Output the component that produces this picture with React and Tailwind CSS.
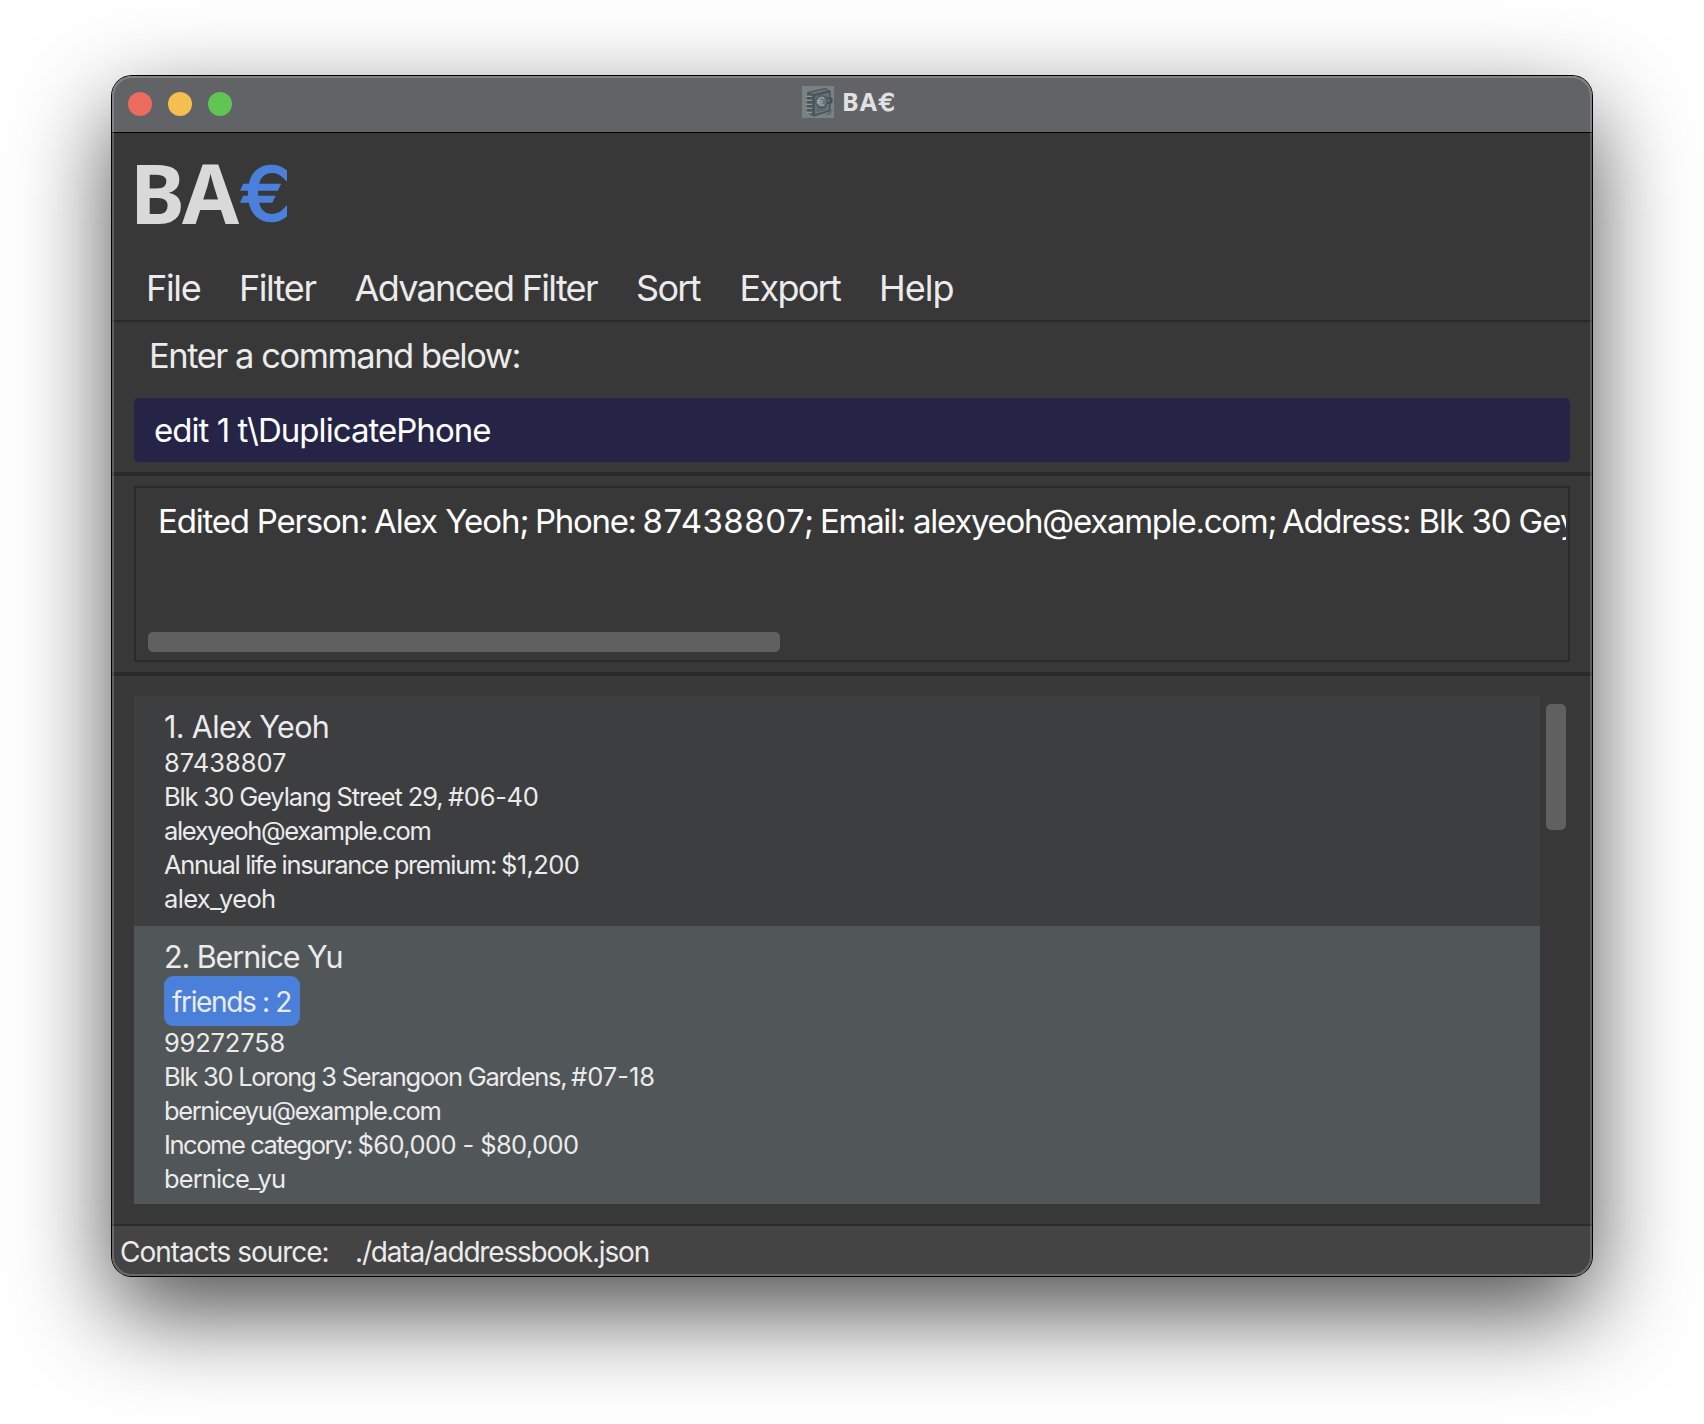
import React from "react";

const menus = [
  { label: "File", cls: "w-[93px] tracking-[-1.3px]" },
  { label: "Filter", cls: "w-[115.5px] tracking-[-1.45px]" },
  { label: "Advanced Filter", cls: "w-[281.5px] tracking-[-1.68px]" },
  { label: "Sort", cls: "w-[103.5px] tracking-[-1.7px]" },
  { label: "Export", cls: "w-[139.5px] tracking-[-1.7px]" },
  { label: "Help", cls: "w-[90px] tracking-[-0.95px]" },
];

const resultParts = [
  { text: "Edited Person:", cls: "w-[216px] tracking-[-1.2px]" },
  { text: "Alex Yeoh;", cls: "w-[161px] tracking-[-1.05px]" },
  { text: "Phone:", cls: "w-[107.5px] tracking-[-1.3px]" },
  { text: "87438807;", cls: "w-[177.5px] tracking-[0.5px]" },
  { text: "Email:", cls: "w-[93px] tracking-[-1.3px]" },
  { text: "alexyeoh@example.com;", cls: "w-[369px] tracking-[-1.27px]" },
  { text: "Address:", cls: "w-[136.5px] tracking-[-1.3px]" },
  { text: "Blk 30", cls: "w-[100px] tracking-[-1px]" },
  { text: "Geylang Street 29, #06-40", cls: "w-[440px] tracking-[-0.9px]" },
];

const people = [
  {
    name: "1. Alex Yeoh",
    nameCls: "tracking-[-0.65px]",
    cls: "h-[230px] bg-[#3c3e3f]",
    rows: [
      [["87438807", "tracking-[0px]"]],
      [["Blk 30 Geylang Street 29,", "w-[284px] tracking-[-1.12px]"], ["#06-40", "tracking-[-0.3px]"]],
      [["alexyeoh@example.com", "tracking-[-1.35px]"]],
      [["Annual life insurance premium:", "w-[337px] tracking-[-1.33px]"], ["$1,200", "tracking-[-0.6px]"]],
      [["alex_yeoh", "tracking-[-0.65px]"]],
    ],
  },
  {
    name: "2. Bernice Yu",
    nameCls: "tracking-[-1.08px]",
    cls: "h-[278px] bg-[#515658]",
    tag: "friends : 2",
    rows: [
      [["99272758", "tracking-[-0.2px]"]],
      [["Blk 30 Lorong 3 Serangoon Gardens,", "w-[407px] tracking-[-1.27px]"], ["#07-18", "tracking-[0px]"]],
      [["berniceyu@example.com", "tracking-[-1.4px]"]],
      [["Income category:", "w-[193.5px] tracking-[-1.43px]"], ["$60,000 - $80,000", "tracking-[-0.6px]"]],
      [["bernice_yu", "tracking-[-0.9px]"]],
    ],
  },
];

function BookIcon() {
  return (
    <svg width="32" height="32" viewBox="0 0 32 32" className="block" fill="none">
      <rect width="32" height="32" fill="#7a8183" />
      <path d="M7 29.500 L28 28.500 L31 24 L22 29 Z" fill="#5f696e" />
      <path d="M5 6.500 L23 2 L28.500 5 L28.500 25 L11.500 30.500 L5 27 Z" fill="#4f5a63" />
      <path d="M5.500 6.500 L23 2.500 L28 5 L11.500 8.800 Z" fill="#667176" stroke="#414b55" strokeWidth="0.8" />
      <path d="M12 9.200 L28 5.300 V24.700 L12 29.800 Z" fill="#5b666d" stroke="#3f4a54" strokeWidth="0.9" />
      <path d="M14 11.200 L26 8.200 V23.200 L14 27 Z" stroke="#78848a" strokeWidth="0.7" />
      <circle cx="19.500" cy="15.500" r="5.800" fill="#68747b" stroke="#3f4a54" strokeWidth="0.9" />
      <path d="M22.300 12.600 A3.700 3.700 0 1 0 22.300 18.400 M15 14.600 H20.500 M15 16.600 H20.500" stroke="#9ea8ab" strokeWidth="1.1" />
      <path d="M24.800 12 H27.500 A2 2 0 0 1 27.500 17 H24.800" stroke="#414c55" strokeWidth="1.4" />
      <path d="M4.500 10.500 H9.500 M4.500 14.500 H9.500 M4.500 18.500 H9.500 M4.500 22.500 H9.500 M4.500 26.500 H9.500" stroke="#8b9699" strokeWidth="1.3" strokeLinecap="round" />
      <path d="M4.500 11.800 H9.500 M4.500 15.800 H9.500 M4.500 19.800 H9.500 M4.500 23.800 H9.500" stroke="#3c4650" strokeWidth="0.9" />
    </svg>
  );
}

function TitleBar() {
  return (
    <div className="relative flex h-[57px] items-start justify-center border-b border-black bg-[#626367]">
      <div className="absolute left-4 top-[16px] flex gap-4">
        <span className="size-6 rounded-full bg-[#ed6a5e]" />
        <span className="size-6 rounded-full bg-[#f5bf4f]" />
        <span className="size-6 rounded-full bg-[#61c554]" />
      </div>
      <div className="mr-[6px] flex items-start pt-[10px]">
        <BookIcon />
        <span className="-mt-px ml-2 w-[54px] whitespace-nowrap font-['Noto_Sans',sans-serif] text-[25px] font-bold leading-8 tracking-[1px] text-[#e1e1e4]">
          BA<span className="ml-px font-['DejaVu_Sans',sans-serif] font-normal [-webkit-text-stroke:1px_#e1e1e4]">€</span>
        </span>
      </div>
    </div>
  );
}

function PersonCard({ person }) {
  return (
    <div className={"shrink-0 pl-[30px] " + person.cls}>
      <div className={"h-[50px] whitespace-nowrap pt-[13px] text-[30.5px] leading-[36px] " + person.nameCls}>{person.name}</div>
      {person.tag && (
        <div className="h-[50px] w-[136px] whitespace-nowrap rounded-[9px] bg-[#4a80d9] pl-2 pt-px text-[28px] leading-[50px] tracking-[-1.35px]">
          {person.tag}
        </div>
      )}
      {person.rows.map((row, i) => (
        <div key={i} className="flex h-[34px] whitespace-pre text-[25.5px] leading-[34px]">
          {row.map(([text, cls]) => (
            <span key={text} className={"shrink-0 " + cls}>{text}</span>
          ))}
        </div>
      ))}
    </div>
  );
}

export default function App() {
  return (
    <div className="h-[1424px] w-[1704px] overflow-hidden bg-white px-[112px] pt-[76px] font-['Inter',sans-serif]">
      <div className="relative h-[1200px] w-[1480px] rounded-[20px] shadow-[0_0_0_1px_#000,0_36px_96px_rgba(0,0,0,0.7)]">
        <div className="flex h-full flex-col overflow-hidden rounded-[20px] bg-[#383838] text-[#ebebeb]">
          <TitleBar />

          <div className="flex h-[121px] items-baseline pl-[18px] pt-[9px] text-[82.6px] leading-[100px]">
            <span className="w-[111.5px] shrink-0 whitespace-nowrap font-['Noto_Sans',sans-serif] font-bold tracking-[-3px] text-[#d9d9d9]">BA</span>
            <span className="origin-left -translate-y-[4px] scale-x-[1.05] font-['DejaVu_Sans',sans-serif] text-[73px] text-[#4a80d9] [-webkit-text-stroke:2.5px_#4a80d9]">€</span>
          </div>

          <nav className="flex h-[68px] items-center border-b-2 border-[#2a2a2a] pl-[34px] pt-0.5 text-[36px] leading-[60px]">
            {menus.map((m) => (
              <span key={m.label} className={"shrink-0 whitespace-nowrap " + m.cls}>{m.label}</span>
            ))}
          </nav>

          <section className="h-[154px] border-b-4 border-[#2a2a2a] px-[22px]">
            <div className="h-[76px] pl-[15px] text-[34.5px] leading-[67px] tracking-[-1.46px]">Enter a command below:</div>
            <div className="h-16 rounded-[5px] bg-[#252447] pl-5 text-[33px] leading-[64px] tracking-[-0.96px] text-white">edit 1 t\DuplicatePhone</div>
          </section>

          <section className="h-[200px] border-b-4 border-[#2a2a2a] px-[22px] pt-[10px]">
            <div className="flex h-[176px] flex-col justify-between overflow-hidden border-2 border-[#2a2a2a] pb-2 pl-3 pr-0.5">
              <div className="flex overflow-hidden whitespace-nowrap pl-[10px] text-[33px] leading-[66px] text-white">
                {resultParts.map((p) => (
                  <span key={p.text} className={"shrink-0 " + p.cls}>{p.text}</span>
                ))}
              </div>
              <div className="h-5 w-[632px] rounded-[5px] bg-[#606060]" />
            </div>
          </section>

          <section className="flex h-[548px] gap-[6px] px-[22px] py-5">
            <div className="flex w-[1406px] flex-col">
              {people.map((p) => (
                <PersonCard key={p.name} person={p} />
              ))}
            </div>
            <div className="mt-2 h-[126px] w-5 rounded-[5px] bg-[#606060]" />
          </section>

          <footer className="flex h-[52px] border-t-2 border-[#2a2a2a] bg-[#444444] pl-2 pt-px text-[28px] leading-[50px]">
            <span className="w-[235px] tracking-[-1.02px]">Contacts source:</span>
            <span className="tracking-[-1.18px]">./data/addressbook.json</span>
          </footer>
        </div>
        <div className="pointer-events-none absolute inset-0 rounded-[20px] border-2 border-white/20" />
      </div>
    </div>
  );
}
